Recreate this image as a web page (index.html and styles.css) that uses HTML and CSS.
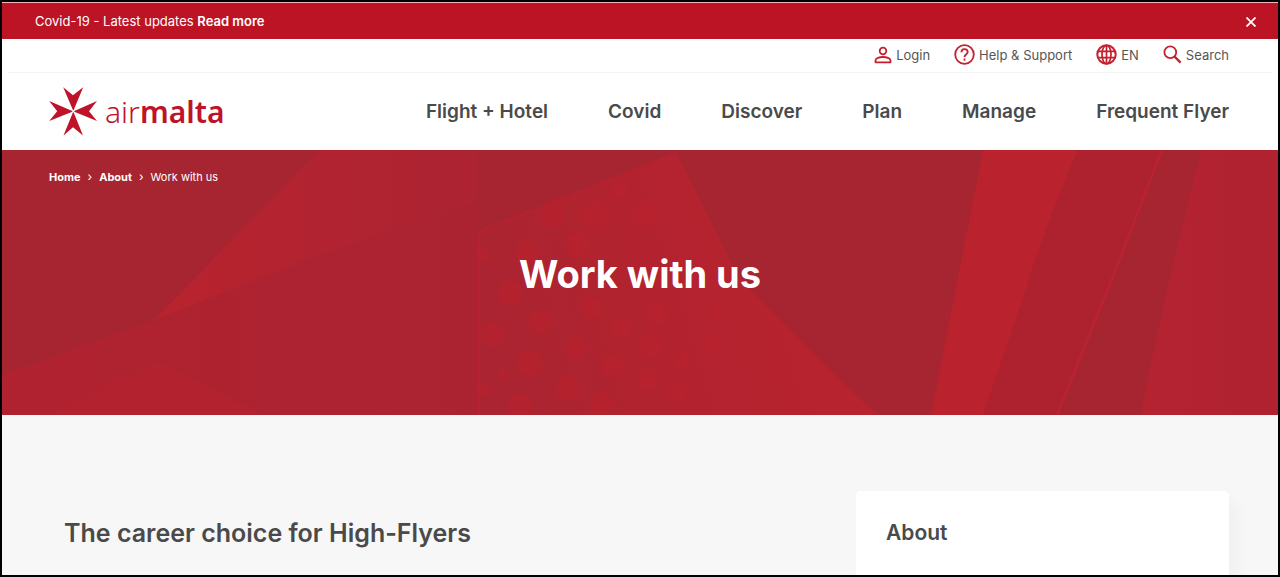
FILE: index.html
```html
<!DOCTYPE html>
<html lang="en">
<head>
<meta charset="utf-8">
<meta name="viewport" content="width=device-width, initial-scale=1">
<title>Work with us | Air Malta</title>
<link rel="stylesheet" href="styles.css">
</head>
<body>
<div class="page">
  <div class="notice">
    <p class="notice-text">Covid-19 - Latest updates <a href="#updates">Read more</a></p>
    <button class="notice-close" type="button" aria-label="Close notice">
      <svg width="10" height="10" viewBox="0 0 10 10" aria-hidden="true"><path d="M.5.5l9 9M9.500.5l-9 9" fill="none" stroke="#fff" stroke-width="1.800"/></svg>
    </button>
  </div>

  <header class="header">
    <nav class="utility" aria-label="Account and help">
      <a class="utility-link" href="#login">
        <svg width="18" height="18" viewBox="0 0 18 18" fill="none" stroke="#c4202f" stroke-width="1.800" aria-hidden="true"><circle cx="9" cy="5" r="3.300"/><path d="M1.500 16.300v-1.800c0-2.300 4-3.500 7.500-3.500s7.500 1.200 7.500 3.500v1.800z" stroke-linejoin="round"/></svg>
        <span>Login</span>
      </a>
      <a class="utility-link" href="#help">
        <svg width="21" height="21" viewBox="0 0 21 21" fill="none" stroke="#c4202f" stroke-width="1.800" aria-hidden="true"><circle cx="10.500" cy="10.500" r="9.300"/><path d="M7.400 8.300c0-1.900 1.300-3.100 3.100-3.100s3.200 1.200 3.200 2.900c0 2.400-3.200 2.500-3.200 5"/><path d="M10.500 14.500v2.200"/></svg>
        <span>Help &amp; Support</span>
      </a>
      <a class="utility-link" href="#language">
        <svg width="21" height="21" viewBox="0 0 21 21" fill="none" stroke="#c4202f" stroke-width="2" aria-hidden="true"><circle cx="10.500" cy="10.500" r="9.200"/><ellipse cx="10.500" cy="10.500" rx="4.500" ry="9.200" stroke-width="1.700"/><path d="M2 7.300h17M2 13.700h17M10.500 1.500v18" stroke-width="1.700"/></svg>
        <span>EN</span>
      </a>
      <a class="utility-link" href="#search">
        <svg width="19" height="19" viewBox="0 0 19 19" fill="none" stroke="#c4202f" stroke-width="1.800" aria-hidden="true"><circle cx="7.300" cy="7.300" r="5.900"/><path d="M11.600 11.600l6 6" stroke-width="2.200"/></svg>
        <span>Search</span>
      </a>
    </nav>
    <div class="masthead">
      <a class="logo" href="#home" aria-label="Air Malta">
        <svg width="48" height="49" viewBox="0 0 48 49" fill="#be1328" aria-hidden="true">
          <path d="M24 23.300L14.200.2 24 8.200 34.200.2 24.600 23.300z"/>
          <path d="M24 25.300L14.500 48.500 24 40.300 34 48.500 24.600 25.300z"/>
          <path d="M23.300 24.100L.2 14 8.200 24.300.200 34 23.300 24.700z"/>
          <path d="M25.300 24.100L48 14 40 24.300 48 34 25.300 24.700z"/>
        </svg>
        <span class="wordmark">air<b>malta</b></span>
      </a>
      <nav class="main-nav" aria-label="Main">
        <a href="#flight">Flight + Hotel</a>
        <a href="#covid">Covid</a>
        <a href="#discover">Discover</a>
        <a href="#plan">Plan</a>
        <a href="#manage">Manage</a>
        <a href="#flyer">Frequent Flyer</a>
      </nav>
    </div>
  </header>

  <section class="hero">
    <svg class="hero-art" viewBox="0 0 1276 265" preserveAspectRatio="none" aria-hidden="true">
      <defs>
        <linearGradient id="sail" x1="0" x2="1" y1="0" y2="0"><stop offset="0" stop-color="#b9232e"/><stop offset=".5" stop-color="#b22331"/><stop offset="1" stop-color="#ad2331"/></linearGradient>
        <linearGradient id="slope" x1="0" x2="1" y1="0" y2="0"><stop offset="0" stop-color="#b12230"/><stop offset="1" stop-color="#ab2331"/></linearGradient>
        <linearGradient id="panel" x1="0" x2="1" y1=".6" y2=".4"><stop offset="0" stop-color="#aa2431"/><stop offset=".45" stop-color="#b3232f"/><stop offset=".75" stop-color="#b7232f"/></linearGradient>
        <linearGradient id="corner" x1="0" x2="1" y1="0" y2="0"><stop offset="0" stop-color="#b42330"/><stop offset="1" stop-color="#b02230"/></linearGradient>
      </defs>
      <path fill="url(#sail)" d="M152 170L318 0H476V52L318 105z"/>
      <path fill="url(#slope)" d="M0 225L152 170 318 105 476 50V265H0z"/>
      <path fill="#b5232f" d="M50 265L110 232 158 212 260 265z" opacity=".7"/>
      <path fill="url(#panel)" d="M476 82L674 2Q698 50 724 102 734 124 752 144L846 238 876 265H476z"/>
      <path fill="none" stroke="#b6232f" stroke-width="2" d="M477 265V82L674 3"/>
      <g fill="#ba222e" opacity=".6">
        <circle cx="551" cy="66" r="12"/><circle cx="593" cy="65" r="13"/><circle cx="525" cy="102" r="12"/><circle cx="575" cy="95" r="12"/><circle cx="508" cy="142" r="12"/><circle cx="482" cy="105" r="7"/><circle cx="538" cy="172" r="12"/><circle cx="490" cy="185" r="13"/><circle cx="589" cy="158" r="11"/><circle cx="575" cy="197" r="11"/><circle cx="528" cy="213" r="13"/><circle cx="619" cy="178" r="11"/><circle cx="610" cy="215" r="11"/><circle cx="566" cy="237" r="12"/><circle cx="648" cy="197" r="11"/><circle cx="645" cy="230" r="11"/><circle cx="600" cy="253" r="11"/><circle cx="518" cy="255" r="12"/><circle cx="655" cy="165" r="11"/><circle cx="501" cy="225" r="6"/><circle cx="676" cy="242" r="10"/><circle cx="680" cy="211" r="9"/><circle cx="642" cy="65" r="12"/><circle cx="618" cy="40" r="9"/><circle cx="555" cy="54" r="6"/><circle cx="636" cy="130" r="10"/><circle cx="482" cy="240" r="7"/><circle cx="710" cy="195" r="9"/><circle cx="714" cy="165" r="9"/>
      </g>
      <path fill="#ba232d" d="M981 0H1076Q1040 85 1024 140L981 265H929z"/>
      <path fill="#ae2230" d="M1076 0H1162L1056 265H981L1024 140Q1040 85 1076 0z"/>
      <path fill="none" stroke="#b82332" stroke-width="3" d="M1160 0L1112 124 1055 265"/>
      <path fill="url(#corner)" d="M1200 0H1276V265H1139Q1160 150 1200 0z"/>
    </svg>
    <nav class="crumbs" aria-label="Breadcrumb">
      <a href="#home">Home</a><i>›</i><a href="#about">About</a><i>›</i><span>Work with us</span>
    </nav>
    <h1 class="hero-title">Work with us</h1>
  </section>

  <main class="content">
    <h2 class="intro">The career choice for High-Flyers</h2>
    <aside class="card"><h3>About</h3></aside>
  </main>
</div>
</body>
</html>
```
FILE: styles.css
```css
* { box-sizing: border-box; }
body { margin: 0; font-family: Inter, "Open Sans", sans-serif; color: #4a4a4a; }
a { color: inherit; text-decoration: none; }
h1, h2, h3, p { margin: 0; }

.page { display: flex; flex-direction: column; min-height: 100vh; border: 2px solid #000; background: #f7f7f7; }

.notice { display: flex; align-items: center; justify-content: space-between; padding: 9px 22px 8px 33px; border-top: 1px solid #f0b8be; background: #bc1325; color: #fff; }
.notice-text { font-size: 13px; line-height: 19px; }
.notice-text a { font-weight: 600; }
.notice-close { display: flex; padding: 0; border: 0; background: none; cursor: pointer; }

.header { background: #fff; }
.utility { display: flex; justify-content: flex-end; align-items: center; gap: 24px; height: 34px; margin: 0 6px; padding: 0 43px 2px; border-bottom: 1px solid #f4f4f4; color: #555; font-size: 13px; }
.utility-link { display: flex; align-items: center; gap: 4px; }
.utility svg { flex: none; }
.masthead { display: flex; align-items: center; justify-content: space-between; gap: 32px; min-height: 77px; padding: 0 49px 0 47px; }
.logo { display: flex; align-items: center; gap: 8px; color: #be1328; }
.wordmark { font-family: "Noto Sans", sans-serif; font-size: 30px; font-weight: 300; line-height: 40px; }
.wordmark b { font-weight: 600; }
.main-nav { display: flex; gap: 60px; font-size: 19px; font-weight: 600; line-height: 24px; white-space: nowrap; }

.hero { position: relative; display: flex; flex-direction: column; min-height: 265px; padding: 18px 47px; background: #a72431; color: #fff; }
.hero-art { position: absolute; inset: 0; width: 100%; height: 100%; }
.crumbs { position: relative; display: flex; align-items: center; font-size: 11px; line-height: 18px; }
.crumbs a { font-weight: 700; }
.crumbs i { padding: 0 7px; font-size: 12px; font-style: normal; }
.hero-title { position: relative; margin-top: 64px; font-size: 38px; font-weight: 700; line-height: 48px; text-align: center; }

.content { flex: 1; display: flex; justify-content: space-between; gap: 48px; padding: 76px 49px 0 62px; overflow: hidden; }
.intro { padding-top: 26px; font-size: 25px; font-weight: 600; line-height: 32px; }
.card { width: 373px; padding: 28px 30px; border-radius: 5px 5px 0 0; background: #fff; box-shadow: 8px 12px 12px #eff0f3; }
.card h3 { font-size: 21px; font-weight: 600; line-height: 28px; }
```
